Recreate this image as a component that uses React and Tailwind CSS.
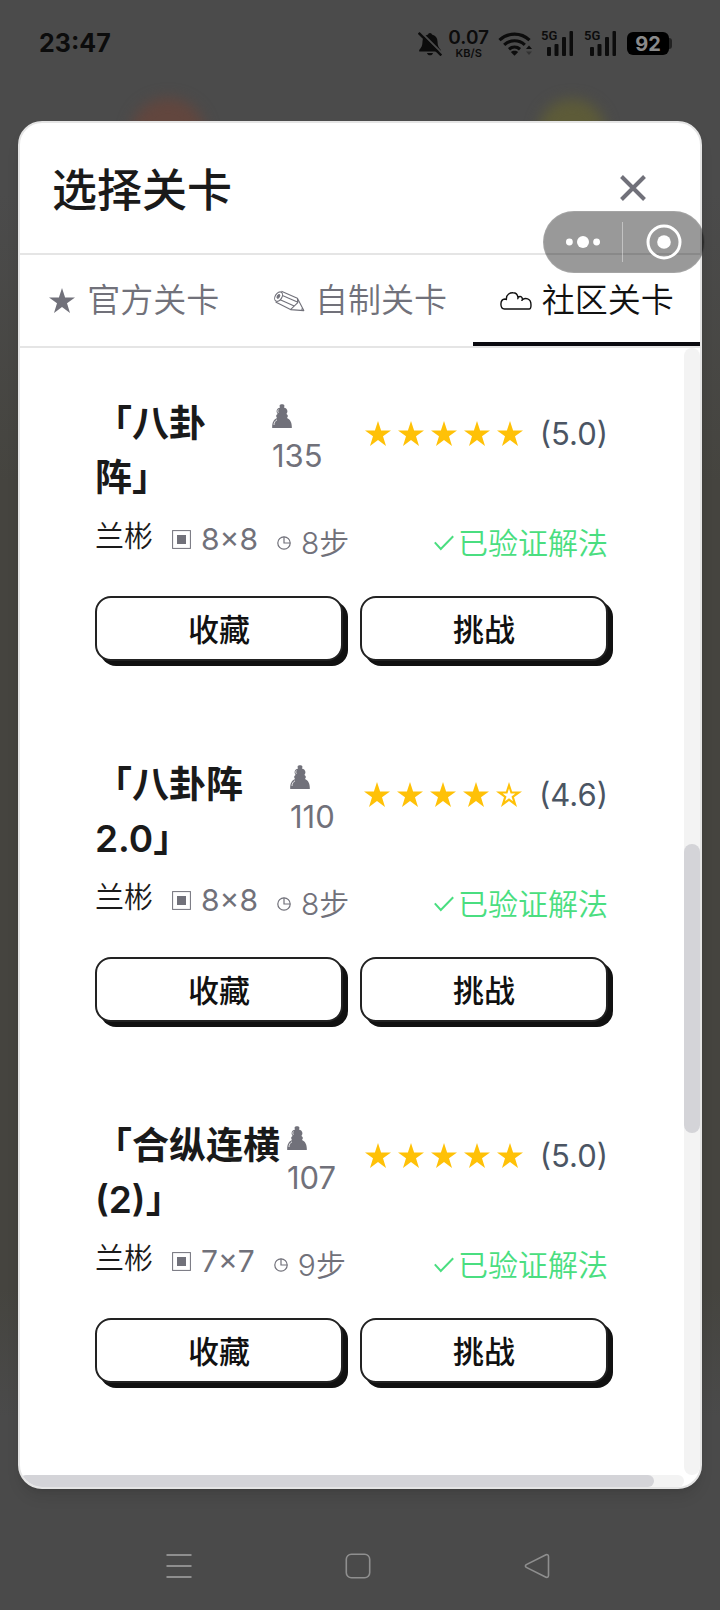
import React, { useState } from 'react';

const TABS = [
  { id: 'official', label: '官方关卡', Icon: OfficialIcon },
  { id: 'custom', label: '自制关卡', Icon: PencilIcon },
  { id: 'community', label: '社区关卡', Icon: CloudIcon },
];

const LEVELS = [
  { title: '「八卦阵」', plays: 135, rating: 5.0, author: '兰彬', size: '8×8', steps: 8, titleWidth: 'w-[177px] pr-6' },
  { title: '「八卦阵 2.0」', plays: 110, rating: 4.6, author: '兰彬', size: '8×8', steps: 8, titleWidth: 'w-[195px]' },
  { title: '「合纵连横 (2)」', plays: 107, rating: 5.0, author: '兰彬', size: '7×7', steps: 9, titleWidth: 'w-[192px]' },
];

const STAR = 'M13 0l3.1 9.4H26l-8 5.9 3 9.6-8-5.9-8 5.9 3-9.6-8-5.9h9.9z';

function StarIcon({ hollow = false }) {
  return (
    <svg className="w-[26px] h-[26px] shrink-0" viewBox="0 0 26 26" fill="currentColor" fillRule="evenodd" aria-hidden="true">
      <path d={hollow ? STAR + 'M13 6.5l-1.6 5H6.6l3.9 2.9-1.5 4.8 4-3 4 3-1.5-4.8 3.9-2.9h-4.8z' : STAR} />
    </svg>
  );
}

function OfficialIcon() {
  return (
    <span className="px-[2px]">
      <StarIcon />
    </span>
  );
}

function PencilIcon() {
  return (
    <svg className="w-8 h-6 shrink-0" viewBox="0 0 32 24" fill="none" stroke="currentColor" strokeWidth="1.1" strokeLinejoin="round" aria-hidden="true">
      <ellipse cx="5.6" cy="7.6" rx="3.3" ry="5.2" transform="rotate(32 5.6 7.6)" />
      <ellipse cx="5.4" cy="7.4" rx="1" ry="2" fill="currentColor" transform="rotate(32 5.4 7.4)" />
      <path d="M8.4 2.2l16 7 6.4 12.4-13.3-1L2.6 13M9.4 6.6l15 6.4M7.2 10.8l14 6.2M24.4 9.2l.4 4.4-3.4 3.2-3.9 3.8M28.6 20.6l1-1.6" />
    </svg>
  );
}

function CloudIcon() {
  return (
    <svg className="w-8 h-[18px] shrink-0" viewBox="0 0 32 18" fill="none" stroke="currentColor" strokeWidth="1.4" strokeLinejoin="round" aria-hidden="true">
      <path d="M4.5 17C-.3 16.4-.4 7.4 5 7c.6 0 1 .2 1.4.5C6 2 10.5.7 13 .8c3 0 4.6 2.2 5 4.7C20 3.6 22.5 4.5 22.4 7.6 25 6 31 5.5 31 13c0 2.5-.5 4-1.8 4zM18 5.5c-.2.7-.2 1.2 0 1.8M22.4 7.6c-.3.5-.6 1-.6 1.5" />
    </svg>
  );
}

function PawnIcon() {
  return (
    <svg className="w-5 h-6" viewBox="0 0 20 24" fill="currentColor" aria-hidden="true">
      <path d="M7.7 1.2C8.3-.2 11.7-.2 12.3 1.2c.3.9 0 1.6-.4 2.3 3 .5 4.8 3.6 2.5 6.5 2 1.2 1.6 2.8.6 4 4 2 5 5.5 4.8 10H.2C0 19.5 1 16 5 14c-1-1.2-1.4-2.8.6-4-2.3-2.9-.5-6 2.5-6.5-.4-.7-.7-1.4-.4-2.3z" />
      <path d="M2 21c.1-2.6 1.2-4.2 3-5.2M6.4 5.5c-.8 1-.8 2.3 0 3.3" stroke="#fff" fill="none" strokeWidth=".8" />
    </svg>
  );
}

function BoardIcon() {
  return (
    <svg className="w-[19px] h-[19px]" viewBox="0 0 19 19" aria-hidden="true">
      <rect x=".6" y=".6" width="17.8" height="17.8" fill="none" stroke="currentColor" />
      <rect x="5" y="5" width="9" height="9" fill="currentColor" />
    </svg>
  );
}

function ClockIcon() {
  return (
    <svg className="w-[14px] h-[14px]" viewBox="0 0 14 14" fill="none" stroke="currentColor" strokeWidth="1.2" aria-hidden="true">
      <circle cx="7" cy="7" r="6.2" />
      <path d="M7 .8V7h6.2" />
    </svg>
  );
}

function CheckIcon() {
  return (
    <svg className="w-5 h-4" viewBox="0 0 20 16" fill="none" stroke="currentColor" strokeWidth="2" aria-hidden="true">
      <path d="M.8 7.4l6 6.6L19.2 1.2" />
    </svg>
  );
}

function SignalIcon() {
  return (
    <div className="relative w-8 h-[25px]">
      <span className="absolute left-0 -top-px font-[Roboto,sans-serif] text-[13px] leading-3 font-semibold">5G</span>
      <svg className="w-8 h-[25px]" viewBox="0 0 32 25" fill="currentColor" aria-hidden="true">
        <rect x="6" y="16" width="4" height="9" rx="1" />
        <rect x="13.5" y="13" width="4" height="12" rx="1" />
        <rect x="21" y="6" width="4" height="19" rx="1" />
        <rect x="28.5" y="0" width="3.5" height="25" rx="1" />
      </svg>
    </div>
  );
}

function StatusBar() {
  return (
    <div className="flex items-center justify-between pl-[39px] pr-12 h-[87px] text-[#0c0c0c]">
      <span className="text-[25px] font-bold">23:47</span>
      <div className="flex items-center gap-[9px]">
        <div className="flex items-center gap-[6px]">
          <svg className="w-6 h-6" viewBox="0 0 24 24" fill="currentColor" aria-hidden="true">
            <path d="M12 1c1.2 0 1.8.8 1.9 1.6 3.6.9 5.6 3.4 5.6 7 0 4.3 1.2 6.3 3.3 8.3v1.5H1.2v-1.5c2.1-2 3.3-4 3.3-8.3 0-3.6 2-6.1 5.6-7C10.2 1.8 10.8 1 12 1zM9 21h6c-.4 1.5-1.5 2.3-3 2.3S9.4 22.5 9 21z" />
            <path d="M1.8-1L25 22.2" stroke="#4b4b4b" strokeWidth="2" />
            <path d="M.7.9l22.6 22.5" stroke="currentColor" strokeWidth="2.4" />
          </svg>
          <div className="flex flex-col items-center font-semibold">
            <span className="text-[19px] leading-[19px]">0.07</span>
            <span className="text-[11px] leading-3">KB/S</span>
          </div>
        </div>
        <svg className="w-[34px] h-6" viewBox="0 0 34 24" fill="none" stroke="currentColor" strokeWidth="3.2" aria-hidden="true">
          <path d="M1.5 8.2C10 .2 23 .2 31.5 8.2M6.2 12.8c5.8-5.4 14.8-5.4 20.6 0M11 17.3c3.2-2.8 7.8-2.8 11 0" />
          <path d="M12.8 20c2.1-1.8 5.3-1.8 7.4 0l-3.7 3.7z" fill="currentColor" stroke="none" />
          <path d="M28 17l3-3.5 3 3.5z" fill="currentColor" stroke="none" />
          <path d="M28 19.5l3 3.5 3-3.5z" fill="#333" stroke="none" />
        </svg>
        <div className="flex items-center gap-[11px]">
          <SignalIcon />
          <SignalIcon />
          <div className="flex items-center">
            <span className="flex items-center justify-center w-[42px] h-[23px] rounded-md bg-black text-[#8a8a8a] text-[20px] font-bold">92</span>
            <span className="w-[3px] h-[11px] rounded-r bg-[#222]"></span>
          </div>
        </div>
      </div>
    </div>
  );
}

function Rating({ value }) {
  return (
    <div className="flex items-center text-[#ffc107] mt-[17px] h-10">
      <div className="flex gap-[7px]">
        {[1, 2, 3, 4, 5].map((n) => (
          <StarIcon key={n} hollow={n > value} />
        ))}
      </div>
      <span className="ml-[17px] text-[31px] leading-10 text-[#4b5563]">({value.toFixed(1)})</span>
    </div>
  );
}

function LevelCard({ level }) {
  return (
    <article className="mb-[97px] last:mb-0">
      <div className="flex items-start">
        <h2 className={`${level.titleWidth} shrink-0 text-[37px] leading-[54px] font-semibold text-[#1a1a1a]`}>
          {level.title}
        </h2>
        <div className="flex flex-col pt-[7px] text-[#71717a]">
          <PawnIcon />
          <span className="mt-2 text-[31px] leading-10">{level.plays}</span>
        </div>
        <div className="ml-auto pr-[5px]">
          <Rating value={level.rating} />
        </div>
      </div>

      <div className="flex items-center mt-[10px] h-12 text-[30px] leading-10 font-[350] text-[#71717a]">
        <span className="self-start text-[29px] leading-[44px] text-[#1a1a1a]">{level.author}</span>
        <span className="flex items-center gap-[10px] ml-[19px] font-normal">
          <BoardIcon />
          {level.size}
        </span>
        <span className="self-end flex items-center gap-[10px] ml-[19px]">
          <ClockIcon />
          {level.steps}步
        </span>
        <span className="self-end flex items-center gap-1 ml-auto pr-[5px] text-[#4ade80]">
          <CheckIcon />
          已验证解法
        </span>
      </div>

      <div className="grid grid-cols-2 gap-[17px] pr-[5px] mt-[33px]">
        {['收藏', '挑战'].map((label) => (
          <button
            key={label}
            className="h-[65px] pt-1 rounded-[16px] border-2 border-[#222] bg-white shadow-[5px_5px_0_#111] text-[31px] font-medium text-[#111]"
          >
            {label}
          </button>
        ))}
      </div>
    </article>
  );
}

// Tombol menu kapsul di atas modal
function Capsule() {
  return (
    <div className="absolute top-[211px] right-[15px] flex items-center w-[162px] h-[62px] rounded-full border border-white/10 bg-black/40 text-white">
      <button className="w-[78px] flex justify-center" aria-label="更多">
        <svg className="w-[34px] h-3" viewBox="0 0 34 12" fill="currentColor" aria-hidden="true">
          <circle cx="3.4" cy="6" r="3.4" />
          <circle cx="17" cy="6" r="6" />
          <circle cx="30.6" cy="6" r="3.4" />
        </svg>
      </button>
      <span className="w-px h-10 bg-white/40"></span>
      <button className="flex-1 flex justify-center" aria-label="关闭小程序">
        <svg className="w-9 h-9" viewBox="0 0 36 36" aria-hidden="true">
          <circle cx="18" cy="18" r="16" fill="none" stroke="currentColor" strokeWidth="3" />
          <circle cx="18" cy="18" r="6.8" fill="currentColor" />
        </svg>
      </button>
    </div>
  );
}

export default function App() {
  const [tab, setTab] = useState('community');

  return (
    <div className="relative min-h-screen flex flex-col overflow-hidden bg-[linear-gradient(#4b4b4b_12%,#45443f_30%,#45443f_80%,#4a4a4a_88%)] font-[Inter,'Noto_Sans_CJK_SC',sans-serif]">
      {/* Halaman di belakang modal */}
      <div className="absolute top-[98px] left-[130px] w-[76px] h-[76px] rounded-full bg-[#62463e] blur-[7px]"></div>
      <div className="absolute top-[99px] right-[114px] w-[68px] h-[68px] rounded-full bg-[#5d5b38] blur-[7px]"></div>

      <StatusBar />

      <main className="relative flex-1 flex flex-col mt-[34px] mx-[18px] rounded-[24px] border-2 border-[#e5e5e5] bg-white shadow-lg overflow-hidden">
        <header className="flex items-center justify-between h-[132px] pl-8 pr-[54px] border-b-2 border-[#e5e5e5]">
          <h1 className="pt-[6px] text-[45px] font-medium text-[#1a1a1a]">选择关卡</h1>
          <button className="text-[#71717a]" aria-label="关闭">
            <svg className="w-[26px] h-[26px]" viewBox="0 0 26 26" fill="none" stroke="currentColor" strokeWidth="4" aria-hidden="true">
              <path d="M1.5 1.5l23 23M24.5 1.5l-23 23" />
            </svg>
          </button>
        </header>

        <nav className="grid grid-cols-3 h-[93px] border-b-2 border-[#e5e5e5]">
          {TABS.map(({ id, label, Icon }) => (
            <button
              key={id}
              onClick={() => setTab(id)}
              className={`flex items-center justify-center gap-[10px] pt-1 text-[33px] font-[350] border-b-4 ${
                tab === id ? 'border-[#0a0a0f] text-[#111]' : 'border-transparent text-[#71717a]'
              }`}
            >
              <Icon />
              {label}
            </button>
          ))}
        </nav>

        <div className="flex-1 flex">
          <section className="flex-1 pl-[75px] pr-[71px] pt-[49px] pb-12">
            {LEVELS.map((level) => (
              <LevelCard key={level.title} level={level} />
            ))}
          </section>
          <div className="w-4 flex flex-col rounded-full bg-[#f3f3f3]">
            <div className="grow-[496]"></div>
            <div className="grow-[290] rounded-full bg-[#d4d4d8]"></div>
            <div className="grow-[342]"></div>
          </div>
        </div>
        <div className="flex mr-4 h-3 rounded-full bg-[#f3f3f3]">
          <div className="grow-[634] rounded-full bg-[#d4d4d8]"></div>
          <div className="grow-[30]"></div>
        </div>
      </main>

      <Capsule />

      <footer className="flex items-center justify-around h-[121px] pl-[90px] pr-[94px] pt-[32px] text-[#8f8f8f]">
        <button aria-label="最近任务">
          <svg className="w-[26px] h-[26px]" viewBox="0 0 26 26" stroke="currentColor" strokeWidth="1.8" aria-hidden="true">
            <path d="M.5 2h25M.5 13h25M.5 24h25" />
          </svg>
        </button>
        <button aria-label="主屏幕">
          <svg className="w-[26px] h-[26px]" viewBox="0 0 26 26" fill="none" stroke="currentColor" strokeWidth="1.6" aria-hidden="true">
            <rect x="1.3" y="1.3" width="23.4" height="23.4" rx="5" />
          </svg>
        </button>
        <button aria-label="返回">
          <svg className="w-[26px] h-[26px]" viewBox="0 0 26 26" fill="none" stroke="currentColor" strokeWidth="1.6" strokeLinejoin="round" aria-hidden="true">
            <path d="M22 1.7L2.3 11.6q-1.8 1.4 0 2.8L22 24.3q2.4.6 2.5-1.8v-19Q24.4 1.1 22 1.7z" />
          </svg>
        </button>
      </footer>
    </div>
  );
}
